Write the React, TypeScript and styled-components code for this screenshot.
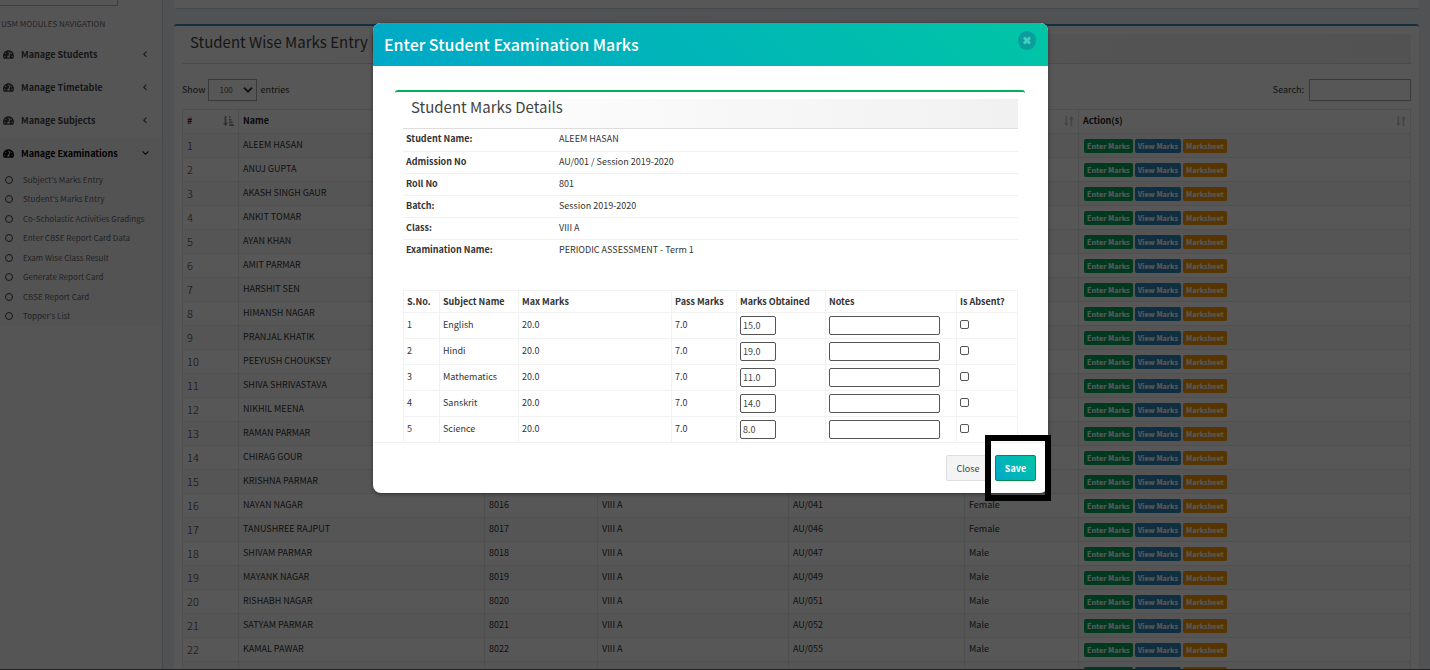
import React from "react";
import styled, { createGlobalStyle } from "styled-components";
import { FaTachometerAlt } from "react-icons/fa";

const GlobalStyle = createGlobalStyle`
  *, *::before, *::after { box-sizing: border-box; }
  html, body { margin: 0; padding: 0; }
  body, button, input, select {
    font-family: "Noto Sans CJK SC", "Open Sans", sans-serif;
    font-size: 9px;
    line-height: 14px;
    color: #333;
  }
  table { font-size: 9px; line-height: 14px; }
  h1, h2, h3, ul, p { margin: 0; padding: 0; font-weight: 400; }
  ul { list-style: none; }
  a { color: inherit; text-decoration: none; }
`;

const Page = styled.div`
  position: relative;
  display: flex;
  height: 100vh;
  overflow: hidden;
  background: #ecf0f5;
`;

/* ---------- sidebar ---------- */

const Sidebar = styled.aside`
  flex: 0 0 163px;
  background: #f9fafc;
  border-right: 1px solid #d2d6de;
`;

const SidebarSearch = styled.div`
  width: 118px;
  height: 6px;
  border: 1px solid #b4b8c0;
  border-width: 0 1px 1px 0;
`;

const SidebarTitle = styled.h3`
  padding: 9px 0 5px 1px;
  font-size: 8px;
  line-height: 18px;
  color: #6c6c6c;
`;

const MenuLink = styled.a<{ $active?: boolean }>`
  display: flex;
  align-items: center;
  height: 33px;
  padding: 0 13px 0 3px;
  font-weight: 700;
  color: ${(p) => (p.$active ? "#000" : "#444")};
  background: ${(p) => (p.$active ? "#f4f4f5" : "transparent")};
  & > span { flex: 1; margin-left: 7px; }
`;

const SubMenu = styled.ul`
  display: grid;
  grid-auto-rows: 1fr;
  height: 156px;
  background: #f4f4f5;
`;

const SubLink = styled.a`
  display: flex;
  align-items: center;
  gap: 10px;
  height: 100%;
  padding-left: 5px;
  font-size: 8px;
  color: #666;
  white-space: nowrap;
  &::before {
    content: "";
    width: 8px;
    height: 8px;
    border: 1px solid #444;
    border-radius: 50%;
  }
`;

/* ---------- main content ---------- */

const Content = styled.main`
  flex: 1;
  min-width: 0;
  padding: 0 11px;
`;

const TopCard = styled.div`
  height: 9px;
  margin-bottom: 15px;
  background: #fff;
  border-radius: 0 0 3px 3px;
  border-bottom: 1px solid #d0d4da;
`;

const Card = styled.section`
  padding: 8px 8px 0;
  height: 100%;
  background: #fff;
  border-top: 2px solid #3c8dbc;
  border-radius: 3px 3px 0 0;
`;

const Heading = styled.h2`
  height: 30px;
  padding-left: 8px;
  font-size: 15px;
  line-height: 16px;
  color: #444;
  border-bottom: 1px solid #ddd;
  background: linear-gradient(90deg, #fff, #f1f1f1);
`;

const Toolbar = styled.div`
  display: flex;
  justify-content: space-between;
  padding: 15px 0 8px;
  height: 45px;
  & > label { display: flex; align-items: center; gap: 3px; }
`;

const SelectWrap = styled.span`
  position: relative;
  display: flex;
  & > svg { position: absolute; right: 4px; top: 7px; pointer-events: none; }
`;

const LengthSelect = styled.select`
  appearance: none;
  width: 49px;
  height: 22px;
  padding: 0 10px;
  font-size: 8px;
  color: #555;
  background: #fff;
  border: 1px solid #aaa;
  border-radius: 0;
`;

const SearchInput = styled.input`
  width: 102px;
  height: 22px;
  margin-left: 2px;
  background: #fff;
  border: 1px solid #aaa;
`;

const Grid = styled.table`
  width: 100%;
  table-layout: fixed;
  border-collapse: collapse;
  th, td {
    height: 24px;
    padding: 0 4px 2px;
    text-align: left;
    border: 1px solid #e8e8e8;
    white-space: nowrap;
  }
  th { color: #222; }
  tbody tr:nth-child(odd) { background: #f9f9f9; }
  td:first-child { font-size: 11px; font-weight: 300; }
`;

const HeadCell = styled.span`
  display: flex;
  align-items: center;
  justify-content: space-between;
`;

const Actions = styled.div`
  display: flex;
  gap: 2px;
  padding: 2px 0 0 1px;
`;

const Action = styled.button<{ $color: string }>`
  height: 14px;
  padding: 0 3px;
  font-size: 7px;
  font-weight: 900;
  line-height: 14px;
  color: #fff;
  background: ${(p) => p.$color};
  border: 0;
  border-radius: 2px;
`;

/* ---------- modal ---------- */

const Backdrop = styled.div`
  position: absolute;
  inset: 0;
  display: flex;
  justify-content: center;
  align-items: flex-start;
  padding: 23px 9px 0 0;
  background: rgba(0, 0, 0, 0.66);
  border-bottom: 1px solid #222;
`;

const Dialog = styled.div`
  width: 675px;
  max-width: 100%;
  background: #fff;
  border-radius: 8px;
  box-shadow: 0 1px 4px rgba(0, 0, 0, 0.4);
`;

const DialogHeader = styled.header`
  display: flex;
  justify-content: space-between;
  align-items: flex-start;
  height: 43px;
  padding: 8px 12px 0 11px;
  border-radius: 8px 8px 0 0;
  background: linear-gradient(45deg, #00a8c8, #00c5a5);
`;

const DialogTitle = styled.h1`
  font-size: 16px;
  line-height: 26px;
  font-weight: 500;
  color: #fff;
`;

const DialogClose = styled.button`
  display: grid;
  place-items: center;
  width: 18px;
  height: 19px;
  padding: 0;
  background: #0b9d9d;
  border: 0;
  border-radius: 50%;
`;

const DialogBody = styled.div`
  padding: 24px 23px 0 22px;
`;

const Details = styled.section`
  padding: 7px 7px 0 8px;
  border-top: 2px solid #00b159;
  border-radius: 3px;
`;

const InfoTable = styled.table`
  width: 100%;
  margin-bottom: 29px;
  border-collapse: collapse;
  table-layout: fixed;
  th, td {
    height: 22px;
    padding: 0 3px 1px;
    text-align: left;
    color: #333;
  }
  th { width: 153px; }
  tr + tr { border-top: 1px solid #f0f0f0; }
`;

const MarksTable = styled.table`
  width: 100%;
  table-layout: fixed;
  border-collapse: collapse;
  th, td {
    height: 26px;
    padding: 0 3px;
    text-align: left;
    white-space: nowrap;
    color: #333;
    border: 1px solid #f2f2f2;
  }
  th { height: 22px; }
  td { padding-bottom: 2px; }
  td:has(input) { padding-bottom: 0; }
`;

const TextInput = styled.input<{ $width: number }>`
  display: block;
  width: ${(p) => p.$width}px;
  height: 19px;
  padding: 0 2px;
  color: #444;
  background: #fff;
  border: 1px solid #555;
  border-radius: 2px;
`;

const CheckBox = styled.input`
  appearance: none;
  display: block;
  width: 9px;
  height: 9px;
  margin: 0 0 2px;
  background: #fff;
  border: 1px solid #555;
  border-radius: 2px;
  &:checked { background: #0075ff; }
`;

const DialogFooter = styled.footer`
  display: flex;
  justify-content: flex-end;
  gap: 5px;
  margin-top: -1px;
  padding: 12px;
  border-top: 1px solid #f0f0f0;
`;

const CloseButton = styled.button`
  height: 26px;
  width: 44px;
  padding: 2px 0 0;
  color: #444;
  background: #f4f4f4;
  border: 1px solid #ddd;
  border-radius: 2px;
`;

const SaveButton = styled.button`
  height: 26px;
  width: 41px;
  padding: 2px 0 0;
  font-weight: 700;
  color: #fff;
  background: linear-gradient(45deg, #00a8c8, #00c5a5);
  border: 1px solid #008d4c;
  border-radius: 2px;
`;

const Highlight = styled.div`
  position: relative;
  &::after {
    content: "";
    position: absolute;
    inset: -20px -15px -20px -10px;
    border: 6px solid #000;
    pointer-events: none;
  }
`;

/* ---------- icons ---------- */

const Chevron = ({ down }: { down?: boolean }) => (
  <svg width="7" height="8" viewBox="0 0 7 8" fill="none" stroke="currentColor" strokeWidth="1.1">
    <path d={down ? "M0.6 1.4 L3.5 4.3 L6.4 1.4" : "M4.4 0.6 L1.8 3.2 L4.4 5.8"} />
  </svg>
);

const SelectArrow = () => (
  <svg width="10" height="8" viewBox="0 0 10 8" fill="none" stroke="#333" strokeWidth="2">
    <path d="M1 1.6 L5 5.6 L9 1.6" />
  </svg>
);

const SortIcon = ({ sorted }: { sorted?: boolean }) =>
  sorted ? (
    <svg width="11" height="12" viewBox="0 0 11 12" fill="#222" opacity="0.5">
      <path d="M1.6 1h1.8v7H5L2.5 11.2 0 8h1.6z M6 1.2h1.6v1.6H6z M6 3.9h2.6v1.6H6z M6 6.6h3.6v1.6H6z M6 9.3h5v1.6H6z" />
    </svg>
  ) : (
    <svg width="10" height="12" viewBox="0 0 10 12" fill="#222" opacity="0.25">
      <path d="M1.6 1h1.5v7h1.5L2.3 11.2 0 8h1.6z M6.7 11.2h1.5V4.2H10L7.5 1 5.2 4.2h1.5z" />
    </svg>
  );

const CrossIcon = () => (
  <svg width="8" height="9" viewBox="0 0 8 9" fill="none" stroke="#3fd0bd" strokeWidth="3">
    <path d="M1 1.5 L7 7.5 M7 1.5 L1 7.5" />
  </svg>
);

/* ---------- data ---------- */

const subLinks = [
  "Subject's Marks Entry",
  "Student's Marks Entry",
  "Co-Scholastic Activities Gradings",
  "Enter CBSE Report Card Data",
  "Exam Wise Class Result",
  "Generate Report Card",
  "CBSE Report Card",
  "Topper's List",
];

const students: string[][] = [
  ["ALEEM HASAN"],
  ["ANUJ GUPTA"],
  ["AKASH SINGH GAUR"],
  ["ANKIT TOMAR"],
  ["AYAN KHAN"],
  ["AMIT PARMAR"],
  ["HARSHIT SEN"],
  ["HIMANSH NAGAR"],
  ["PRANJAL KHATIK"],
  ["PEEYUSH CHOUKSEY"],
  ["SHIVA SHRIVASTAVA"],
  ["NIKHIL MEENA"],
  ["RAMAN PARMAR"],
  ["CHIRAG GOUR"],
  ["KRISHNA PARMAR"],
  ["NAYAN NAGAR", "8016", "VIII A", "AU/041", "Female"],
  ["TANUSHREE RAJPUT", "8017", "VIII A", "AU/046", "Female"],
  ["SHIVAM PARMAR", "8018", "VIII A", "AU/047", "Male"],
  ["MAYANK NAGAR", "8019", "VIII A", "AU/049", "Male"],
  ["RISHABH NAGAR", "8020", "VIII A", "AU/051", "Male"],
  ["SATYAM PARMAR", "8021", "VIII A", "AU/052", "Male"],
  ["KAMAL PAWAR", "8022", "VIII A", "AU/055", "Male"],
  [""],
];

const info = [
  ["Student Name:", "ALEEM HASAN"],
  ["Admission No", "AU/001 / Session 2019-2020"],
  ["Roll No", "801"],
  ["Batch:", "Session 2019-2020"],
  ["Class:", "VIII A"],
  ["Examination Name:", "PERIODIC ASSESSMENT - Term 1"],
];

const marks = [
  ["English", "15.0"],
  ["Hindi", "19.0"],
  ["Mathematics", "11.0"],
  ["Sanskrit", "14.0"],
  ["Science", "8.0"],
];

const gridColumns = [56, 246, 113, 191, 176, 114];
const marksColumns = [36, 79, 153, 65, 89, 131];

export default function App() {
  return (
    <Page>
      <GlobalStyle />
      <Sidebar>
        <SidebarSearch />
        <SidebarTitle>USM MODULES NAVIGATION</SidebarTitle>
        <nav>
          {["Manage Students", "Manage Timetable", "Manage Subjects"].map((name) => (
            <MenuLink key={name} href="#">
              <FaTachometerAlt size={11} />
              <span>{name}</span>
              <Chevron />
            </MenuLink>
          ))}
          <MenuLink href="#" $active>
            <FaTachometerAlt size={11} />
            <span>Manage Examinations</span>
            <Chevron down />
          </MenuLink>
          <SubMenu>
            {subLinks.map((name) => (
              <li key={name}>
                <SubLink href="#">{name}</SubLink>
              </li>
            ))}
          </SubMenu>
        </nav>
      </Sidebar>

      <Content>
        <TopCard />
        <Card>
          <Heading>Student Wise Marks Entry |</Heading>
          <Toolbar>
            <label>
              Show
              <SelectWrap>
                <LengthSelect defaultValue="100">
                  <option>100</option>
                </LengthSelect>
                <SelectArrow />
              </SelectWrap>
              entries
            </label>
            <label>
              Search:
              <SearchInput type="search" />
            </label>
          </Toolbar>
          <Grid>
            <colgroup>
              {gridColumns.map((width, i) => (
                <col key={i} width={width} />
              ))}
              <col />
            </colgroup>
            <thead>
              <tr>
                {["#", "Name", "", "", "", "", "Action(s)"].map((name, i) => (
                  <th key={i}>
                    <HeadCell>
                      {name}
                      <span />
                      <SortIcon sorted={i === 0} />
                    </HeadCell>
                  </th>
                ))}
              </tr>
            </thead>
            <tbody>
              {students.map(([name, roll, cls, admission, gender], i) => (
                <tr key={i}>
                  <td>{name && i + 1}</td>
                  <td>{name}</td>
                  <td>{roll}</td>
                  <td>{cls}</td>
                  <td>{admission}</td>
                  <td>{gender}</td>
                  <td>
                    <Actions>
                      <Action $color="#00a65a">Enter Marks</Action>
                      <Action $color="#2a86c0">View Marks</Action>
                      <Action $color="#ff9c00">Marksheet</Action>
                    </Actions>
                  </td>
                </tr>
              ))}
            </tbody>
          </Grid>
        </Card>
      </Content>

      <Backdrop>
        <Dialog role="dialog" aria-labelledby="dialog-title">
          <DialogHeader>
            <DialogTitle id="dialog-title">Enter Student Examination Marks</DialogTitle>
            <DialogClose aria-label="Close dialog">
              <CrossIcon />
            </DialogClose>
          </DialogHeader>
          <DialogBody>
            <Details>
              <Heading>Student Marks Details</Heading>
              <InfoTable>
                <tbody>
                  {info.map(([label, value]) => (
                    <tr key={label}>
                      <th scope="row">{label}</th>
                      <td>{value}</td>
                    </tr>
                  ))}
                </tbody>
              </InfoTable>
              <MarksTable>
                <colgroup>
                  {marksColumns.map((width, i) => (
                    <col key={i} width={width} />
                  ))}
                  <col />
                </colgroup>
                <thead>
                  <tr>
                    <th>S.No.</th>
                    <th>Subject Name</th>
                    <th>Max Marks</th>
                    <th>Pass Marks</th>
                    <th>Marks Obtained</th>
                    <th>Notes</th>
                    <th>Is Absent?</th>
                  </tr>
                </thead>
                <tbody>
                  {marks.map(([subject, value], i) => (
                    <tr key={subject}>
                      <td>{i + 1}</td>
                      <td>{subject}</td>
                      <td>20.0</td>
                      <td>7.0</td>
                      <td>
                        <TextInput $width={36} defaultValue={value} aria-label={`${subject} marks obtained`} />
                      </td>
                      <td>
                        <TextInput $width={111} aria-label={`${subject} notes`} />
                      </td>
                      <td>
                        <CheckBox type="checkbox" aria-label={`${subject} is absent`} />
                      </td>
                    </tr>
                  ))}
                </tbody>
              </MarksTable>
            </Details>
          </DialogBody>
          <DialogFooter>
            <CloseButton>Close</CloseButton>
            <Highlight>
              <SaveButton>Save</SaveButton>
            </Highlight>
          </DialogFooter>
        </Dialog>
      </Backdrop>
    </Page>
  );
}
